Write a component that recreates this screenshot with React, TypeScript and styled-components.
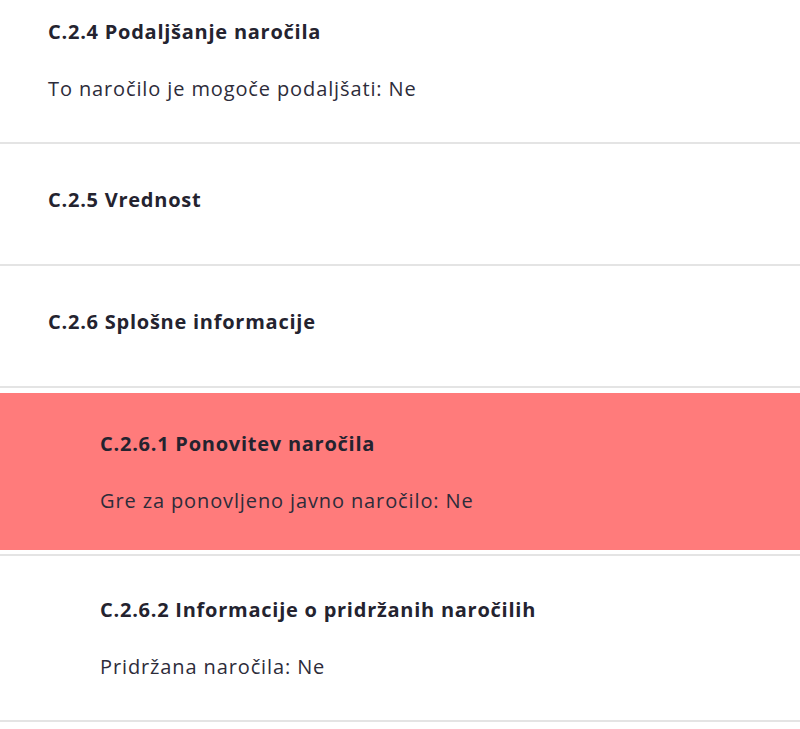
import React from "react";
import styled, { createGlobalStyle } from "styled-components";

const Global = createGlobalStyle`
  html, body { margin: 0; padding: 0; background: #ffffff; }
  body { font-family: "Open Sans", "Noto Sans", sans-serif; color: #24232f; }
  * { box-sizing: border-box; }
`;

const Page = styled.div`
  width: 800px;
  display: flex;
  flex-direction: column;
`;

const Section = styled.section<{ $first?: boolean }>`
  padding: ${(p) => (p.$first ? "20px" : "44px")} 48px 41px;
  border-bottom: 2px solid #e4e4e4;
`;

const Nested = styled.div`
  display: flex;
  flex-direction: column;
`;

const NestedItem = styled.div<{ $highlight?: boolean }>`
  padding: ${(p) => (p.$highlight ? "5px 0 4px" : "0")};
  border-bottom: 2px solid #e4e4e4;
`;

const Inner = styled.div<{ $highlight?: boolean }>`
  background: ${(p) => (p.$highlight ? "#ff7b7b" : "transparent")};
  padding: ${(p) => (p.$highlight ? "39px 100px 37px" : "42px 100px 41px")};
`;

const Heading = styled.h3`
  margin: 0 0 11px;
  font-size: 20px;
  line-height: 24px;
  font-weight: 700;
  letter-spacing: 0.75px;
  color: #24232f;
`;

const Body = styled.p`
  margin: 33px 0 0;
  font-size: 20px;
  line-height: 24px;
  font-weight: 400;
  letter-spacing: 0.88px;
  color: #2d2c3a;
`;

export default function App() {
  return (
    <>
      <Global />
      <Page>
        <Section $first>
          <Heading>C.2.4 Podaljšanje naročila</Heading>
          <Body>To naročilo je mogoče podaljšati: Ne</Body>
        </Section>
        <Section>
          <Heading>C.2.5 Vrednost</Heading>
        </Section>
        <Section>
          <Heading>C.2.6 Splošne informacije</Heading>
        </Section>
        <Nested>
          <NestedItem $highlight>
            <Inner $highlight>
              <Heading>C.2.6.1 Ponovitev naročila</Heading>
              <Body>Gre za ponovljeno javno naročilo: Ne</Body>
            </Inner>
          </NestedItem>
          <NestedItem>
            <Inner>
              <Heading>C.2.6.2 Informacije o pridržanih naročilih</Heading>
              <Body>Pridržana naročila: Ne</Body>
            </Inner>
          </NestedItem>
        </Nested>
      </Page>
    </>
  );
}
